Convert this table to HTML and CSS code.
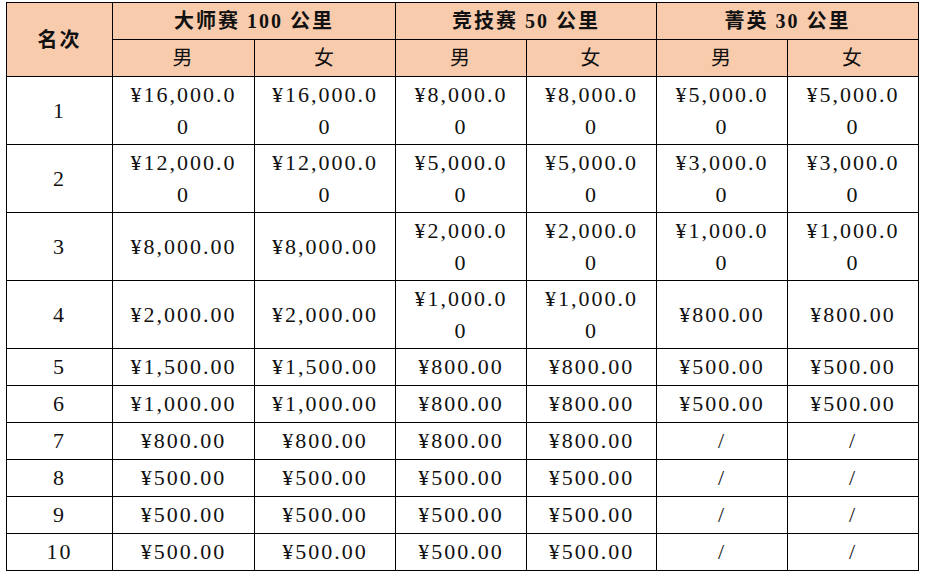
FILE: index.html
```html
<!DOCTYPE html>
<html lang="zh">
<head>
<meta charset="utf-8">
<title>奖金表</title>
<link rel="stylesheet" href="styles.css">
</head>
<body>
<div class="wrap">
<table class="prize">
  <colgroup>
    <col class="c-rank">
    <col class="c-wide">
    <col class="c-wide2">
    <col class="c-mid">
    <col class="c-mid2">
    <col class="c-mid">
    <col class="c-mid">
  </colgroup>
  <thead>
    <tr class="h-row">
      <th rowspan="2" class="h-main">名次</th>
      <th colspan="2" class="h-main">大师赛 100 公里</th>
      <th colspan="2" class="h-main">竞技赛 50 公里</th>
      <th colspan="2" class="h-main">菁英 30 公里</th>
    </tr>
    <tr class="h-row">
      <th class="h-sub">男</th><th class="h-sub">女</th>
      <th class="h-sub">男</th><th class="h-sub">女</th>
      <th class="h-sub">男</th><th class="h-sub">女</th>
    </tr>
  </thead>
  <tbody>
    <tr class="r-tall">
      <td>1</td><td>¥16,000.00</td><td>¥16,000.00</td><td>¥8,000.00</td><td>¥8,000.00</td><td>¥5,000.00</td><td>¥5,000.00</td>
    </tr>
    <tr class="r-tall">
      <td>2</td><td>¥12,000.00</td><td>¥12,000.00</td><td>¥5,000.00</td><td>¥5,000.00</td><td>¥3,000.00</td><td>¥3,000.00</td>
    </tr>
    <tr class="r-tall">
      <td>3</td><td>¥8,000.00</td><td>¥8,000.00</td><td>¥2,000.00</td><td>¥2,000.00</td><td>¥1,000.00</td><td>¥1,000.00</td>
    </tr>
    <tr class="r-tall">
      <td>4</td><td>¥2,000.00</td><td>¥2,000.00</td><td>¥1,000.00</td><td>¥1,000.00</td><td>¥800.00</td><td>¥800.00</td>
    </tr>
    <tr class="r-short">
      <td>5</td><td>¥1,500.00</td><td>¥1,500.00</td><td>¥800.00</td><td>¥800.00</td><td>¥500.00</td><td>¥500.00</td>
    </tr>
    <tr class="r-short">
      <td>6</td><td>¥1,000.00</td><td>¥1,000.00</td><td>¥800.00</td><td>¥800.00</td><td>¥500.00</td><td>¥500.00</td>
    </tr>
    <tr class="r-short">
      <td>7</td><td>¥800.00</td><td>¥800.00</td><td>¥800.00</td><td>¥800.00</td><td class="na">/</td><td class="na">/</td>
    </tr>
    <tr class="r-short">
      <td>8</td><td>¥500.00</td><td>¥500.00</td><td>¥500.00</td><td>¥500.00</td><td class="na">/</td><td class="na">/</td>
    </tr>
    <tr class="r-short">
      <td>9</td><td>¥500.00</td><td>¥500.00</td><td>¥500.00</td><td>¥500.00</td><td class="na">/</td><td class="na">/</td>
    </tr>
    <tr class="r-short">
      <td>10</td><td>¥500.00</td><td>¥500.00</td><td>¥500.00</td><td>¥500.00</td><td class="na">/</td><td class="na">/</td>
    </tr>
  </tbody>
</table>
</div>
</body>
</html>
```
FILE: styles.css
```css
html, body {
  margin: 0;
  padding: 0;
  background: #ffffff;
}

.wrap {
  padding: 2px 0 0 6px;
}

.prize {
  border-collapse: collapse;
  table-layout: fixed;
  width: 913px;
  font-family: "Liberation Serif", "Noto Sans CJK SC", serif;
  color: #111111;
}

.c-rank { width: 106px; }
.c-wide { width: 142px; }
.c-wide2 { width: 141px; }
.c-mid { width: 131px; }
.c-mid2 { width: 130px; }

.prize th,
.prize td {
  border: 1px solid #000000;
  text-align: center;
  vertical-align: middle;
  padding: 0 15px;
}

.prize th {
  background: #f8cbad;
  font-size: 20px;
  line-height: 24px;
  letter-spacing: 2px;
}

.h-row {
  height: 37px;
}

.h-main {
  font-weight: 700;
}

.h-sub {
  font-weight: 400;
}

.prize td {
  font-size: 22px;
  line-height: 32px;
  letter-spacing: 2px;
  word-break: break-all;
}

.r-tall {
  height: 68px;
}

.r-short {
  height: 37px;
}

.na {
  font-size: 20px;
}
```
